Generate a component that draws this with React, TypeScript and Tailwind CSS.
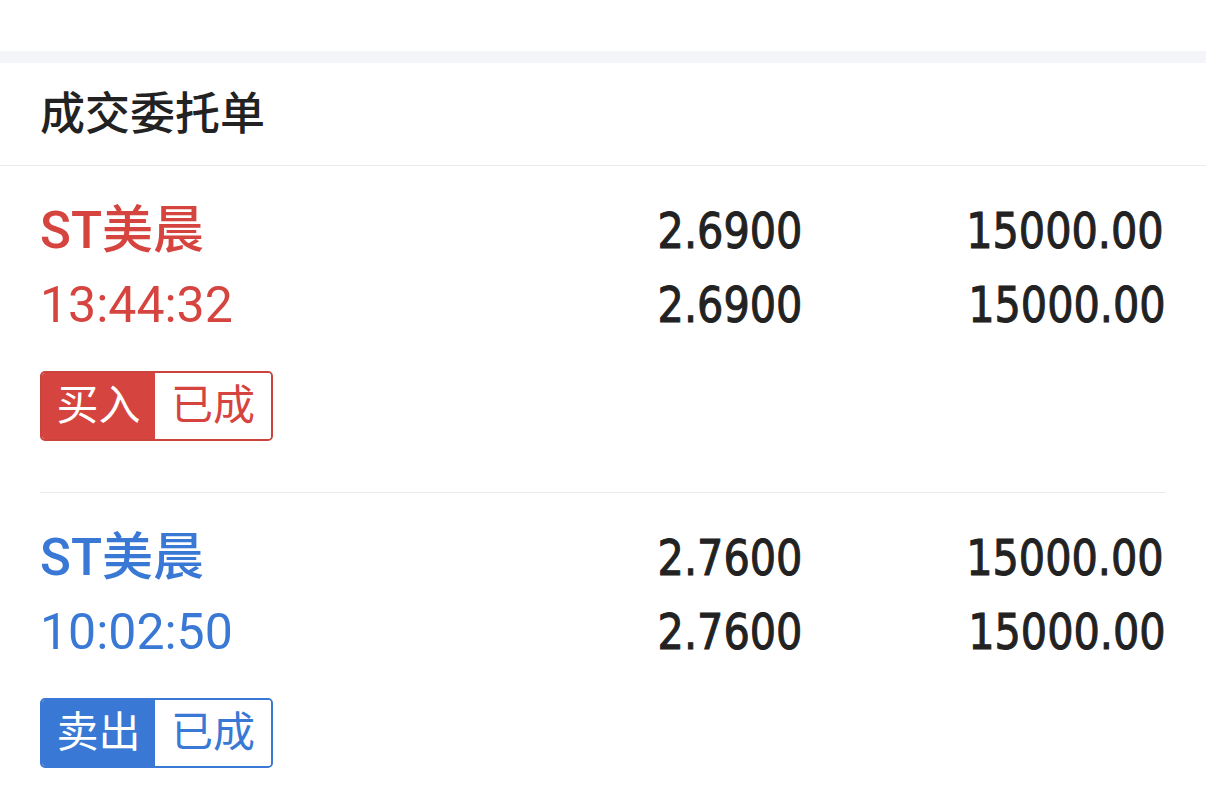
const orders = [
  {
    name: "ST美晨",
    time: "13:44:32",
    price: "2.6900",
    amount: "15000.00",
    side: "买入",
    status: "已成",
    buy: true,
  },
  {
    name: "ST美晨",
    time: "10:02:50",
    price: "2.7600",
    amount: "15000.00",
    side: "卖出",
    status: "已成",
    buy: false,
  },
];

// DIN-like narrow figures
const num =
  "inline-block origin-right scale-x-[0.92] font-['DejaVu_Sans_Condensed','DejaVu_Sans',sans-serif] text-[50px] text-[#222] [-webkit-text-stroke:1px_#222]";

export default function App() {
  return (
    <div className="min-h-[804px] bg-white font-['Roboto','Noto_Sans_CJK_SC',sans-serif]">
      <div className="h-[51px] bg-white" />
      <div className="h-[12px] bg-[#f4f5f9]" />
      <div className="flex h-[103px] items-center border-b border-[#ebebeb] px-[40px]">
        <h2 className="text-[45px] font-medium leading-none text-[#222]">成交委托单</h2>
      </div>

      <div className="px-[40px]">
        {orders.map((o, i) => {
          const color = o.buy ? "text-[#d6443f]" : "text-[#3a78d6]";
          return (
            <div
              key={i}
              className={
                "pt-[28px] pb-[51px] " +
                (i < orders.length - 1 ? "border-b border-[#ebebeb]" : "")
              }
            >
              <div className="flex h-[74px] items-center">
                <div className={"flex-1 text-[51px] font-medium " + color}>
                  {o.name}
                </div>
                <div className="w-[200px] text-right">
                  <span className={num}>{o.price}</span>
                </div>
                <div className="w-[364px] pr-[2px] text-right">
                  <span className={num}>{o.amount}</span>
                </div>
              </div>
              <div className="flex h-[74px] items-center">
                <div className={"flex-1 text-[50px] " + color}>{o.time}</div>
                <div className="w-[200px] text-right">
                  <span className={num}>{o.price}</span>
                </div>
                <div className="w-[364px] text-right">
                  <span className={num}>{o.amount}</span>
                </div>
              </div>
              <div
                className={
                  "mt-[29px] inline-flex h-[70px] overflow-hidden rounded-[5px] border-2 text-[42px] leading-none " +
                  (o.buy ? "border-[#cc433e]" : "border-[#3a78d6]")
                }
              >
                <span
                  className={
                    "flex w-[113px] items-center justify-center text-white " +
                    (o.buy ? "bg-[#d6443f]" : "bg-[#3a78d6]")
                  }
                >
                  {o.side}
                </span>
                <span
                  className={
                    "flex w-[116px] items-center justify-center bg-white " + color
                  }
                >
                  {o.status}
                </span>
              </div>
            </div>
          );
        })}
      </div>
    </div>
  );
}
